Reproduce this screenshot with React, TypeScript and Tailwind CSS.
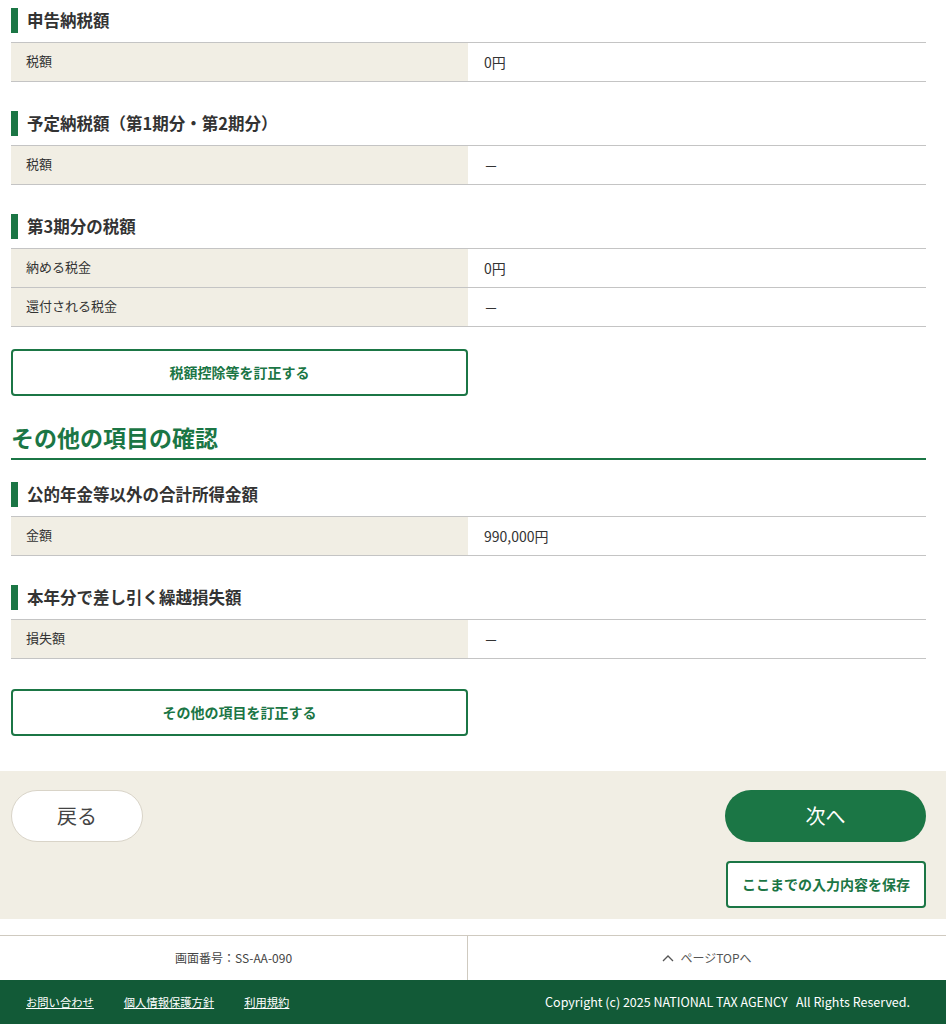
const font = '"Noto Sans CJK JP", "Noto Sans", sans-serif';

type Row = { label: string; value: string };

function SubHeading({ title, className = '' }: { title: string; className?: string }) {
  return (
    <div className={`flex items-center h-[25px] ${className}`}>
      <span className="w-[7px] h-[25px] bg-[#1b7645]" />
      <h3 className="ml-[9px] text-[16.5px] font-bold text-[#333333] leading-none">{title}</h3>
    </div>
  );
}

function InfoTable({ rows }: { rows: Row[] }) {
  return (
    <div className="mt-[9px] border-t border-[#c4c4c4]">
      {rows.map((r) => (
        <div key={r.label} className="flex h-[39px] border-b border-[#c4c4c4]">
          <div className="w-[457px] bg-[#f1eee4] flex items-center pl-[15px] pb-[2px] text-[13px] text-[#333333]">{r.label}</div>
          <div className="flex-1 flex items-center pl-[16px] text-[14px] text-[#333333]">{r.value}</div>
        </div>
      ))}
    </div>
  );
}

function OutlineButton({ label }: { label: string }) {
  return (
    <button className="w-[457px] h-[47px] border-2 border-[#1b7645] rounded-[4px] bg-white text-[14px] font-bold text-[#1b7645]">
      {label}
    </button>
  );
}

export default function App() {
  return (
    <div className="bg-white min-h-screen" style={{ fontFamily: font }}>
      <main className="px-[11px] pt-[8px] w-[937px]">
        <SubHeading title="申告納税額" />
        <InfoTable rows={[{ label: '税額', value: '0円' }]} />

        <SubHeading title="予定納税額（第1期分・第2期分）" className="mt-[29px]" />
        <InfoTable rows={[{ label: '税額', value: '－' }]} />

        <SubHeading title="第3期分の税額" className="mt-[29px]" />
        <InfoTable
          rows={[
            { label: '納める税金', value: '0円' },
            { label: '還付される税金', value: '－' },
          ]}
        />

        <div className="mt-[22px]">
          <OutlineButton label="税額控除等を訂正する" />
        </div>

        <h2 className="mt-[26px] pb-[6px] border-b-2 border-[#1b7645] text-[23px] font-bold text-[#1b7645] leading-[30px]">
          その他の項目の確認
        </h2>

        <SubHeading title="公的年金等以外の合計所得金額" className="mt-[22px]" />
        <InfoTable rows={[{ label: '金額', value: '990,000円' }]} />

        <SubHeading title="本年分で差し引く繰越損失額" className="mt-[29px]" />
        <InfoTable rows={[{ label: '損失額', value: '－' }]} />

        <div className="mt-[30px]">
          <OutlineButton label="その他の項目を訂正する" />
        </div>
      </main>

      <section className="mt-[35px] bg-[#f1eee4] pl-[11px] pr-[20px] pt-[19px] pb-[11px] w-[946px]">
        <div className="flex justify-between items-start">
          <button className="w-[132px] h-[52px] rounded-full bg-white border border-[#d9d4c8] text-[20px] text-[#444444]">
            戻る
          </button>
          <div className="flex flex-col items-end">
            <button className="w-[201px] h-[52px] rounded-full bg-[#1b7645] text-[20px] text-white">次へ</button>
            <button className="mt-[19px] w-[200px] h-[47px] border-2 border-[#1b7645] rounded-[4px] bg-white text-[14px] font-bold text-[#1b7645]">
              ここまでの入力内容を保存
            </button>
          </div>
        </div>
      </section>

      <footer className="mt-[16px] w-[946px]">
        <div className="flex h-[45px] border-t border-[#cfcac0]">
          <div className="w-[468px] flex items-center justify-center border-r border-[#cfcac0] text-[12px] text-[#444444]">
            画面番号：SS-AA-090
          </div>
          <div className="flex-1 flex items-center justify-center text-[12px] text-[#555555]">
            <svg width="12" height="8" viewBox="0 0 12 8" className="mr-[6px]">
              <path d="M1 7 L6 2 L11 7" fill="none" stroke="#555555" strokeWidth="1.3" />
            </svg>
            ページTOPへ
          </div>
        </div>
        <div className="h-[44px] bg-[#125a37] flex items-center justify-between pl-[26px] pr-[36px] text-white">
          <div className="flex gap-[30px] text-[11.3px]">
            <a className="underline">お問い合わせ</a>
            <a className="underline">個人情報保護方針</a>
            <a className="underline">利用規約</a>
          </div>
          <div className="whitespace-pre text-[12.5px]">Copyright (c) 2025 NATIONAL TAX AGENCY   All Rights Reserved.</div>
        </div>
      </footer>
    </div>
  );
}
